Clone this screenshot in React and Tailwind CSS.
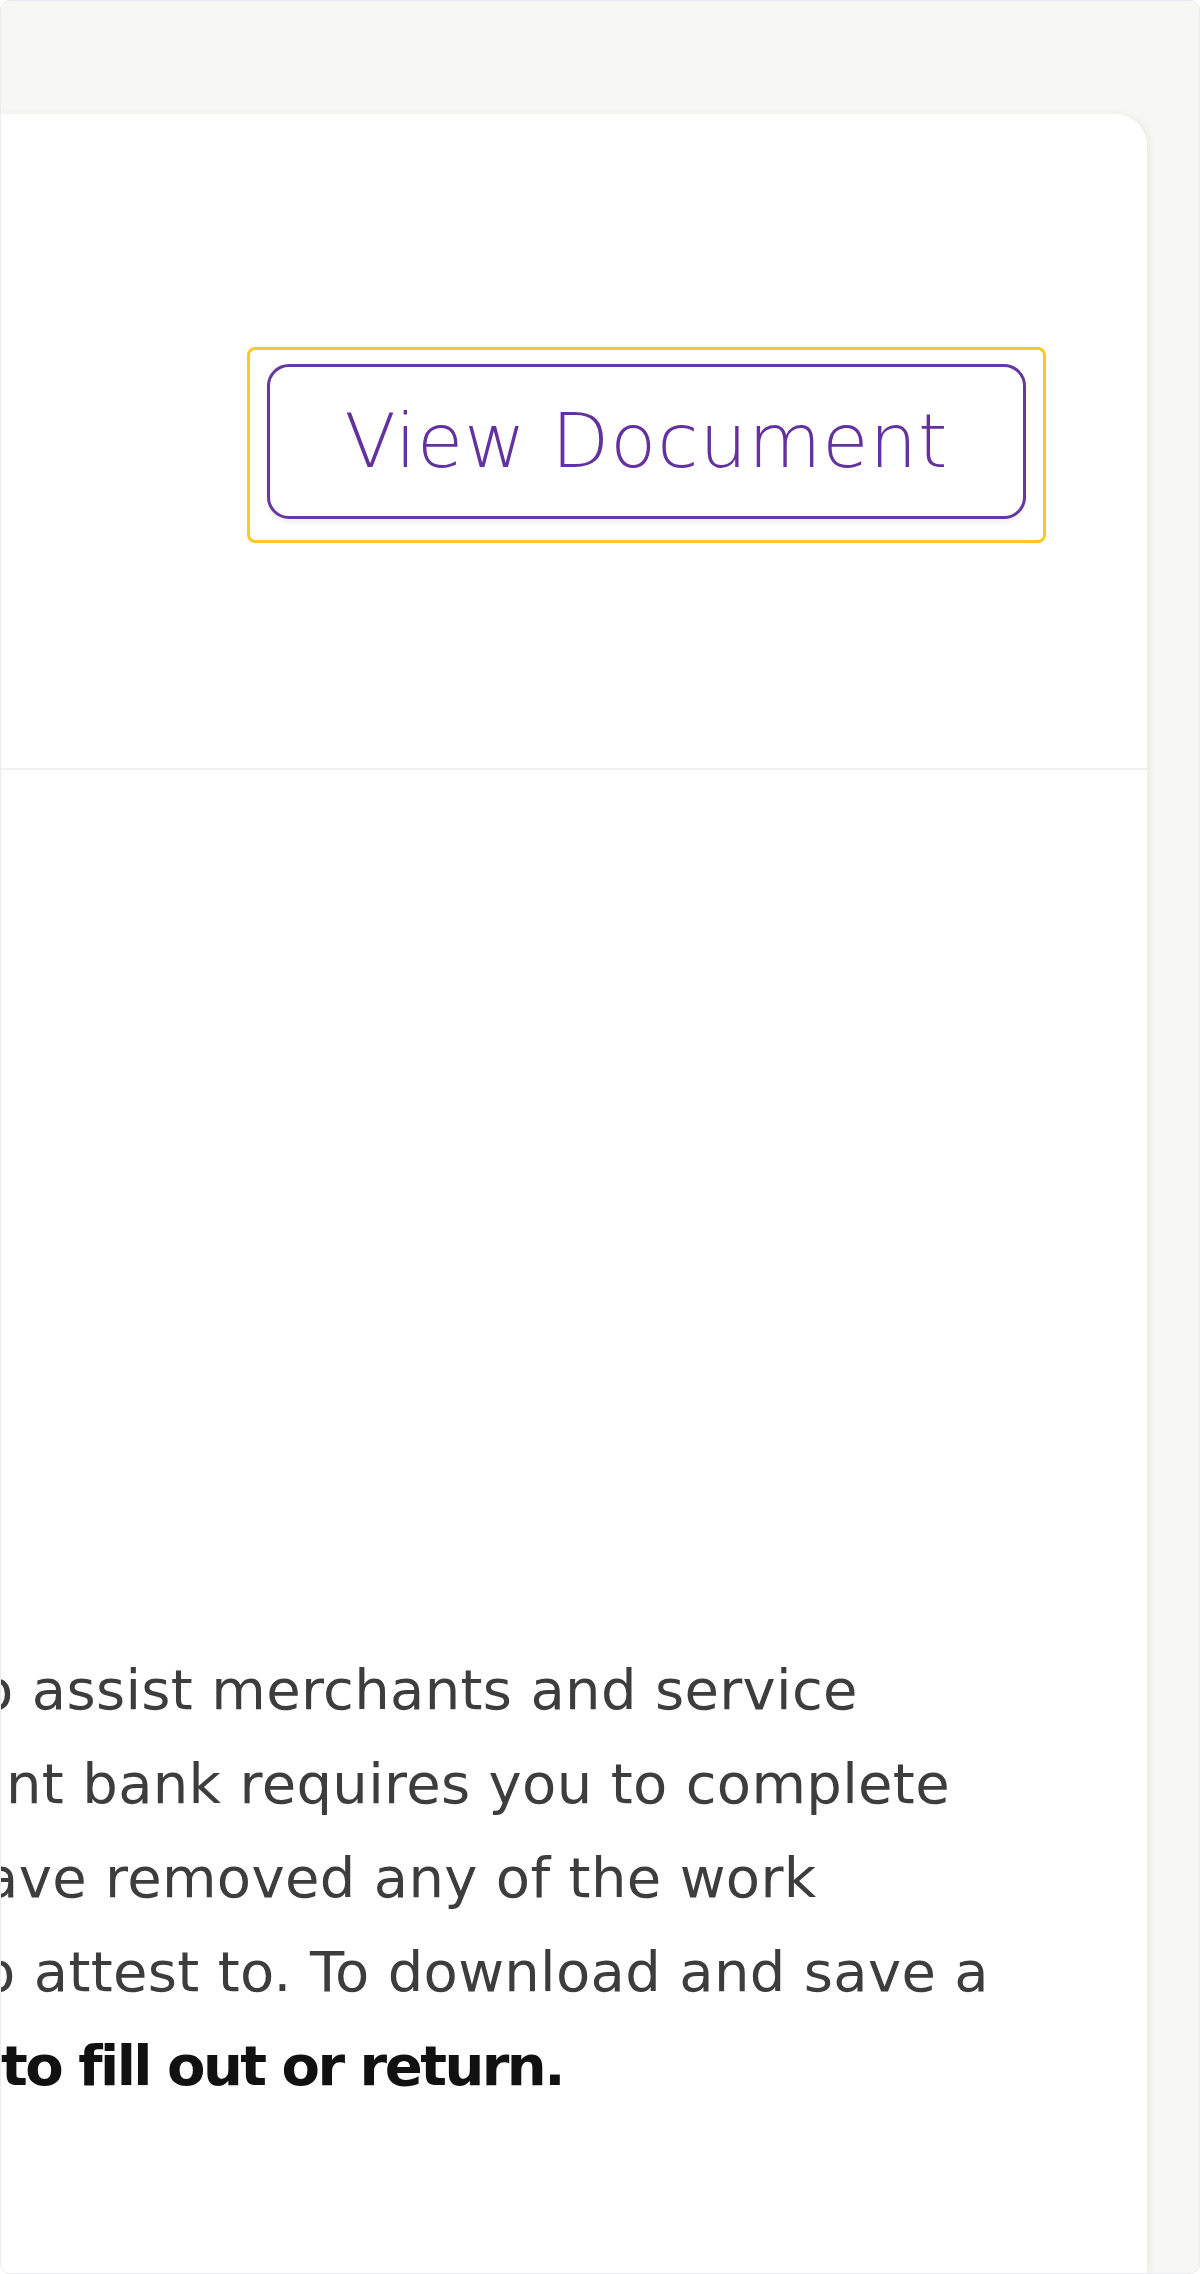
import React from "react";

const lines = [
  { text: "o assist merchants and service", shift: "-ml-[22px]" },
  { text: "nt bank requires you to complete", shift: "ml-[5px]" },
  { text: "ave removed any of the work", shift: "-ml-[17px]" },
  { text: "o attest to. To download and save a", shift: "-ml-[20px]" },
];

export default function App() {
  return (
    <div className="w-[1200px] h-[2274px] bg-[#f7f7f4] border border-[#ebebf2] rounded-[10px] overflow-hidden pt-[113px] font-['DejaVu_Sans',sans-serif]">
      {/* Card */}
      <div className="w-[1146px] h-[2160px] bg-white rounded-tr-[32px] shadow-[3px_0_8px_rgba(0,0,0,0.05)] overflow-hidden">
        {/* Header row with action */}
        <div className="flex justify-end pt-[233px] pb-[225px] pr-[101px] border-b-2 border-[#efefef]">
          <div className="border-[3px] border-[#fbc925] rounded-[8px] px-[17px] pt-[14px] pb-[21px]">
            <button className="w-[759px] h-[155px] border-[3px] border-[#65399e] rounded-[22px] bg-white text-[#6331a0] text-[75px] font-light tracking-[0.014em] leading-none shadow-[0_4px_5px_rgba(0,0,0,0.06)]">
              View Document
            </button>
          </div>
        </div>

        {/* Description */}
        <div className="pt-[873px] text-[56px] leading-[94px] text-[#3d3d3d] tracking-[0.006em] whitespace-nowrap">
          {lines.map((l) => (
            <p key={l.text} className={l.shift}>
              {l.text}
            </p>
          ))}
          <p className="font-bold text-[#111] tracking-[-0.045em]">
            to fill out or return.
          </p>
        </div>
      </div>
    </div>
  );
}
